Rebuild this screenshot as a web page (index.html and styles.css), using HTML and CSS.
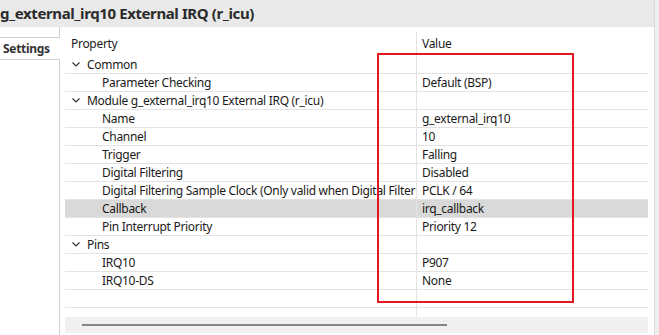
FILE: index.html
```html
<!doctype html>
<html lang="en">
  <head>
    <meta charset="UTF-8" />
    <title>g_external_irq10 External IRQ (r_icu)</title>
    <link rel="stylesheet" href="styles.css">
  </head>
  <body>
    <div class="window">
      <div class="editor">
        <div class="title">g_external_irq10 External IRQ (r_icu)</div>
        <div class="body">
          <div class="tabs">
            <div class="tab-gap"></div>
            <div class="tab active">Settings</div>
            <div class="tab-rest"></div>
          </div>

          <div class="panel">
            <div class="grid">
              <div class="row head">
                <div class="cell prop">Property</div>
                <div class="cell val">Value</div>
              </div>

              <div class="row">
                <div class="cell prop group"><svg class="chev" width="8" height="5" viewBox="0 0 8 5"><path d="M0.5 0.5 L4 4 L7.5 0.5"/></svg>Common</div>
                <div class="cell val"></div>
              </div>
              <div class="row">
                <div class="cell prop child">Parameter Checking</div>
                <div class="cell val">Default (BSP)</div>
              </div>

              <div class="row">
                <div class="cell prop group"><svg class="chev" width="8" height="5" viewBox="0 0 8 5"><path d="M0.5 0.5 L4 4 L7.5 0.5"/></svg>Module g_external_irq10 External IRQ (r_icu)</div>
                <div class="cell val"></div>
              </div>
              <div class="row">
                <div class="cell prop child">Name</div>
                <div class="cell val">g_external_irq10</div>
              </div>
              <div class="row">
                <div class="cell prop child">Channel</div>
                <div class="cell val">10</div>
              </div>
              <div class="row">
                <div class="cell prop child">Trigger</div>
                <div class="cell val">Falling</div>
              </div>
              <div class="row">
                <div class="cell prop child">Digital Filtering</div>
                <div class="cell val">Disabled</div>
              </div>
              <div class="row">
                <div class="cell prop child">Digital Filtering Sample Clock (Only valid when Digital Filter</div>
                <div class="cell val">PCLK / 64</div>
              </div>
              <div class="row selected">
                <div class="cell prop child">Callback</div>
                <div class="cell val">irq_callback</div>
              </div>
              <div class="row">
                <div class="cell prop child">Pin Interrupt Priority</div>
                <div class="cell val">Priority 12</div>
              </div>

              <div class="row">
                <div class="cell prop group"><svg class="chev" width="8" height="5" viewBox="0 0 8 5"><path d="M0.5 0.5 L4 4 L7.5 0.5"/></svg>Pins</div>
                <div class="cell val"></div>
              </div>
              <div class="row">
                <div class="cell prop child">IRQ10</div>
                <div class="cell val">P907</div>
              </div>
              <div class="row">
                <div class="cell prop child">IRQ10-DS</div>
                <div class="cell val">None</div>
              </div>

              <div class="row">
                <div class="cell prop"></div>
                <div class="cell val"></div>
              </div>
              <div class="row filler">
                <div class="cell prop"></div>
                <div class="cell val"></div>
              </div>
            </div>

            <div class="hscroll">
              <div class="thumb"></div>
            </div>
          </div>
        </div>
      </div>

      <div class="vscroll"></div>

      <!-- annotation drawn over the value column -->
      <div class="mark"></div>
    </div>
  </body>
</html>
```

FILE: styles.css
```css
body {
  margin: 0;
  background: #ffffff;
  color: #1a1a1a;
  font-family: 'Noto Sans', 'Liberation Sans', sans-serif;
  font-size: 12px;
  letter-spacing: -0.3px;
}

.window {
  display: flex;
  position: relative;
  width: 659px;
  height: 335px;
  overflow: hidden;
}

.editor {
  display: flex;
  flex-direction: column;
  width: 654px;
}

.title {
  background: #e9e9e9;
  height: 27px;
  line-height: 27px;
  color: #2b2b2b;
  font-weight: 700;
  font-size: 15px;
  letter-spacing: -0.4px;
  white-space: nowrap;
}

.body {
  display: flex;
  flex: 1;
}

.tabs {
  display: flex;
  flex-direction: column;
  width: 60px;
}

.tab-gap {
  box-sizing: border-box;
  border-right: 1px solid #cfcfcf;
  height: 10px;
}

.tab {
  box-sizing: border-box;
  border-top: 1px solid #cfcfcf;
  border-bottom: 1px solid #cfcfcf;
  height: 23px;
  padding-left: 3px;
  line-height: 21px;
  color: #333333;
  font-weight: 700;
  white-space: nowrap;
}

.tab-rest {
  flex: 1;
  border-right: 1px solid #cfcfcf;
}

.panel {
  display: flex;
  flex-direction: column;
  padding: 5px 0 0 5px;
}

.grid {
  display: flex;
  flex-direction: column;
  width: 583px;
}

.row {
  display: flex;
  box-sizing: border-box;
  border-bottom: 1px solid #e3e3e3;
  height: 18px;
}

.row.head {
  border-bottom: none;
  height: 24px;
}

.row.selected {
  background: #d9d9d9;
}

.row.filler {
  border-bottom: none;
  height: 9px;
}

.cell {
  box-sizing: border-box;
  overflow: hidden;
  line-height: 17px;
  white-space: nowrap;
}

.head .cell {
  line-height: 24px;
}

.prop {
  width: 351px;
  padding-left: 6px;
}

.prop.group {
  display: flex;
  align-items: center;
  padding-left: 7px;
}

.prop.child {
  padding-left: 37px;
}

.val {
  flex: 1;
  border-left: 1px solid #e3e3e3;
  padding-left: 5px;
}

.chev {
  margin-right: 7px;
  fill: none;
  stroke: #333333;
  stroke-width: 1.2;
}

.hscroll {
  display: flex;
  align-items: center;
  background: #f0f0f0;
  width: 583px;
  height: 16px;
}

.thumb {
  margin-left: 17px;
  background: #858585;
  width: 365px;
  height: 2px;
}

.vscroll {
  box-sizing: border-box;
  border-left: 1px solid #dcdcdc;
  background: #efefef;
  width: 5px;
}

.mark {
  position: absolute;
  top: 53px;
  left: 377px;
  box-sizing: border-box;
  border: 2px solid #e3191f;
  width: 197px;
  height: 250px;
}
```
